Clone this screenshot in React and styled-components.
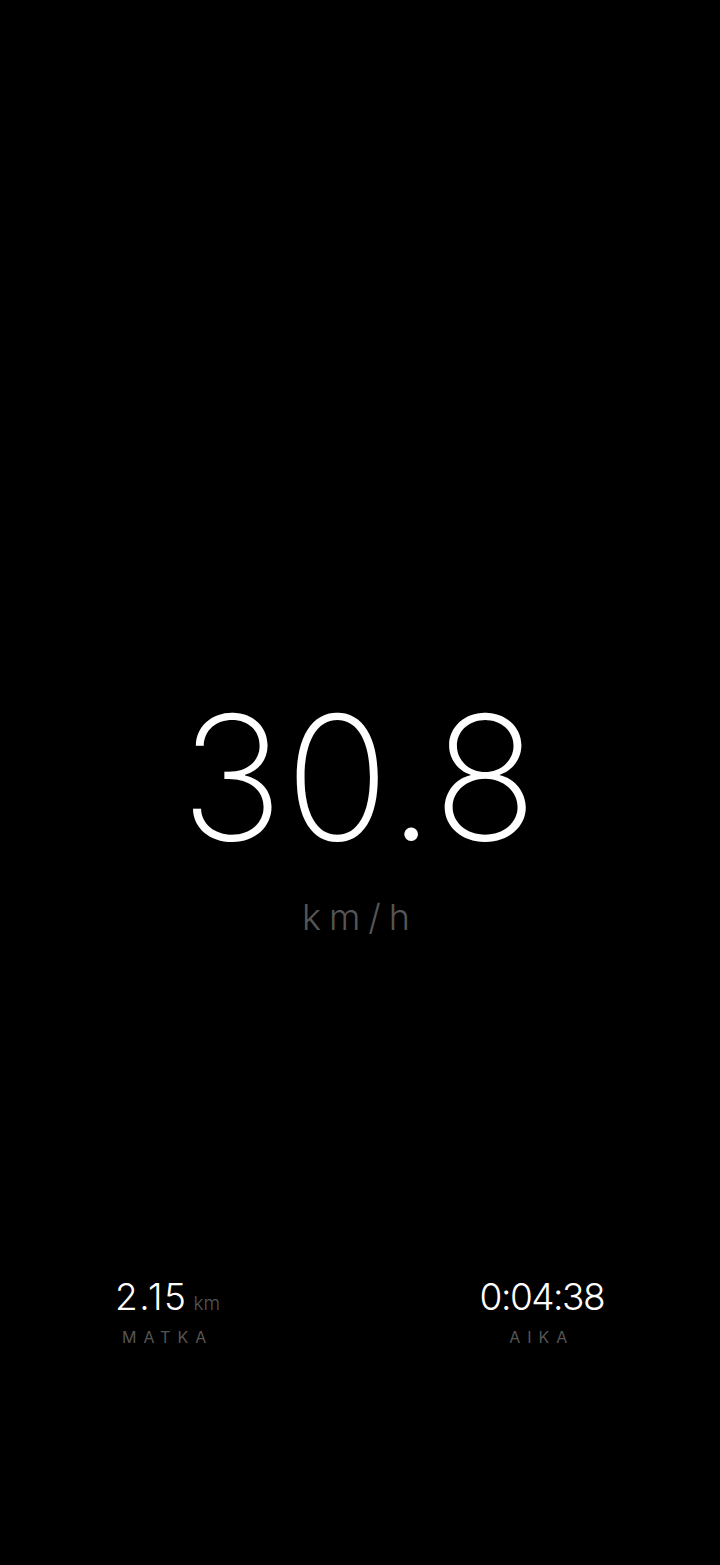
import React from "react";
import styled, { createGlobalStyle } from "styled-components";

const Global = createGlobalStyle`
  html, body { margin: 0; padding: 0; background: #000; }
  body { font-family: "Inter", "Helvetica Neue", "Liberation Sans", sans-serif; }
`;

const Screen = styled.div`
  width: 720px;
  height: 1565px;
  background: #000;
  display: flex;
  flex-direction: column;
  box-sizing: border-box;
`;

const SpeedBlock = styled.div`
  padding-top: 691px;
  display: flex;
  flex-direction: column;
  align-items: center;
`;

const Speed = styled.div`
  color: #fff;
  font-size: 173px;
  font-weight: 200;
  line-height: 1;
  letter-spacing: 2px;
`;

const Unit = styled.div`
  margin-top: 35px;
  color: #555;
  font-size: 36px;
  font-weight: 300;
  letter-spacing: 8px;
  line-height: 1;
`;

const Stats = styled.div`
  margin-top: auto;
  margin-bottom: 220px;
  display: flex;
  justify-content: space-between;
  padding: 0 116px 0 115px;
`;

const Stat = styled.div`
  display: flex;
  flex-direction: column;
  align-items: center;
`;

const Value = styled.div`
  color: #fff;
  font-size: 37px;
  font-weight: 300;
  line-height: 1;
  display: flex;
  align-items: baseline;
  gap: 6px;
  letter-spacing: ${(p) => (p.$tight ? "-1.5px" : "1.5px")};
`;

const Small = styled.span`
  color: #555;
  font-size: 19px;
  font-weight: 300;
  letter-spacing: 0;
`;

const Label = styled.div`
  margin-top: 14px;
  color: #555;
  font-size: 16px;
  font-weight: 400;
  letter-spacing: 7px;
  line-height: 1;
`;

export default function App() {
  return (
    <>
      <Global />
      <Screen>
        <SpeedBlock>
          <Speed>30.8</Speed>
          <Unit>km/h</Unit>
        </SpeedBlock>
        <Stats>
          <Stat>
            <Value>
              2.15<Small>km</Small>
            </Value>
            <Label>MATKA</Label>
          </Stat>
          <Stat>
            <Value $tight>0:04:38</Value>
            <Label>AIKA</Label>
          </Stat>
        </Stats>
      </Screen>
    </>
  );
}
